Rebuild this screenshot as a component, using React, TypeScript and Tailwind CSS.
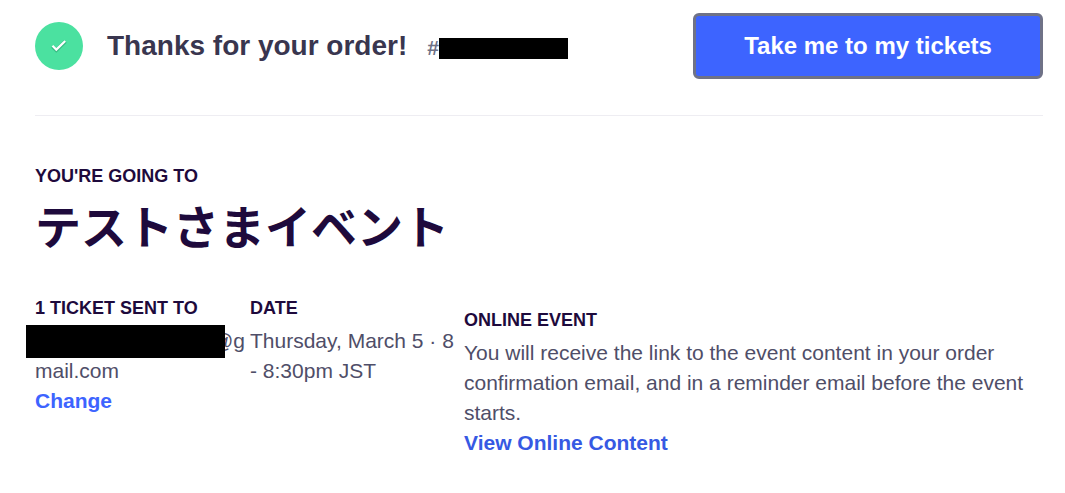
import type { ReactNode } from "react";

type DetailProps = {
  label: string;
  className?: string;
  children: ReactNode;
};

function Label({ children }: { children: ReactNode }) {
  return (
    <h3 className="text-[18px] leading-6 font-bold text-[#1e0a3c] uppercase">
      {children}
    </h3>
  );
}

function Detail({ label, className = "", children }: DetailProps) {
  return (
    <section className={className}>
      <Label>{label}</Label>
      <div className="mt-[6px]">{children}</div>
    </section>
  );
}

function SuccessBadge() {
  return (
    <span className="flex h-12 w-12 shrink-0 items-center justify-center rounded-full bg-[#4be1a0]">
      <svg width="24" height="24" viewBox="0 0 24 24" fill="none" aria-hidden="true">
        <path
          d="M5.4 12.4L9.3 16.3L18.4 7.4"
          stroke="#2b9f6e"
          strokeOpacity="0.6"
          strokeWidth="3.6"
        />
        <path d="M5.5 11.8L9.3 15.6L18.2 7" stroke="#ffffff" strokeWidth="2.2" />
      </svg>
    </span>
  );
}

export default function App() {
  return (
    <main className="bg-white pt-[13px] pr-[22px] pb-8 pl-[35px] font-['Liberation_Sans',Arial,sans-serif] text-[21px] leading-[30px] text-[#4f4e68]">
      <header className="flex items-center justify-between border-b border-[#eeedf2] pb-9">
        <div className="flex items-center">
          <SuccessBadge />
          <h1 className="ml-6 text-[28px] leading-8 font-bold text-[#39364f]">
            Thanks for your order!
          </h1>
          <p className="ml-5 flex items-center pt-1 font-bold text-[#6f7287]">
            <span>#</span>
            <span className="h-[21px] w-[129px] bg-black" />
          </p>
        </div>

        <button
          type="button"
          className="h-[66px] w-[350px] rounded-[6px] border-3 border-[#6f7287] bg-[#3d64ff] text-[24px] leading-8 font-bold text-white"
        >
          Take me to my tickets
        </button>
      </header>

      <div className="pt-12">
        <Label>You're going to</Label>
        <h2 className="mt-1 font-['Noto_Sans_CJK_JP',sans-serif] text-[46px] leading-[64px] font-bold text-[#1e0a3c]">
          テストさまイベント
        </h2>
      </div>

      <div className="mt-10 grid grid-cols-[215fr_214fr_579fr]">
        <Detail label="1 ticket sent to">
          <p className="relative pr-1 break-all">
            <span className="inline-block w-[177px]" />
            @gmail.com
            <span className="absolute -top-px -left-[9px] h-[33px] w-[199px] bg-black" />
          </p>
          <a href="#change" className="font-bold text-[#3d64ff]">
            Change
          </a>
        </Detail>

        <Detail label="Date">
          <p className="pr-2">Thursday, March 5 · 8 - 8:30pm JST</p>
        </Detail>

        <Detail label="Online event" className="pt-3">
          <p>
            You will receive the link to the event content in your order
            confirmation email, and in a reminder email before the event starts.
          </p>
          <a href="#online-content" className="font-bold text-[#3659e3]">
            View Online Content
          </a>
        </Detail>
      </div>
    </main>
  );
}
